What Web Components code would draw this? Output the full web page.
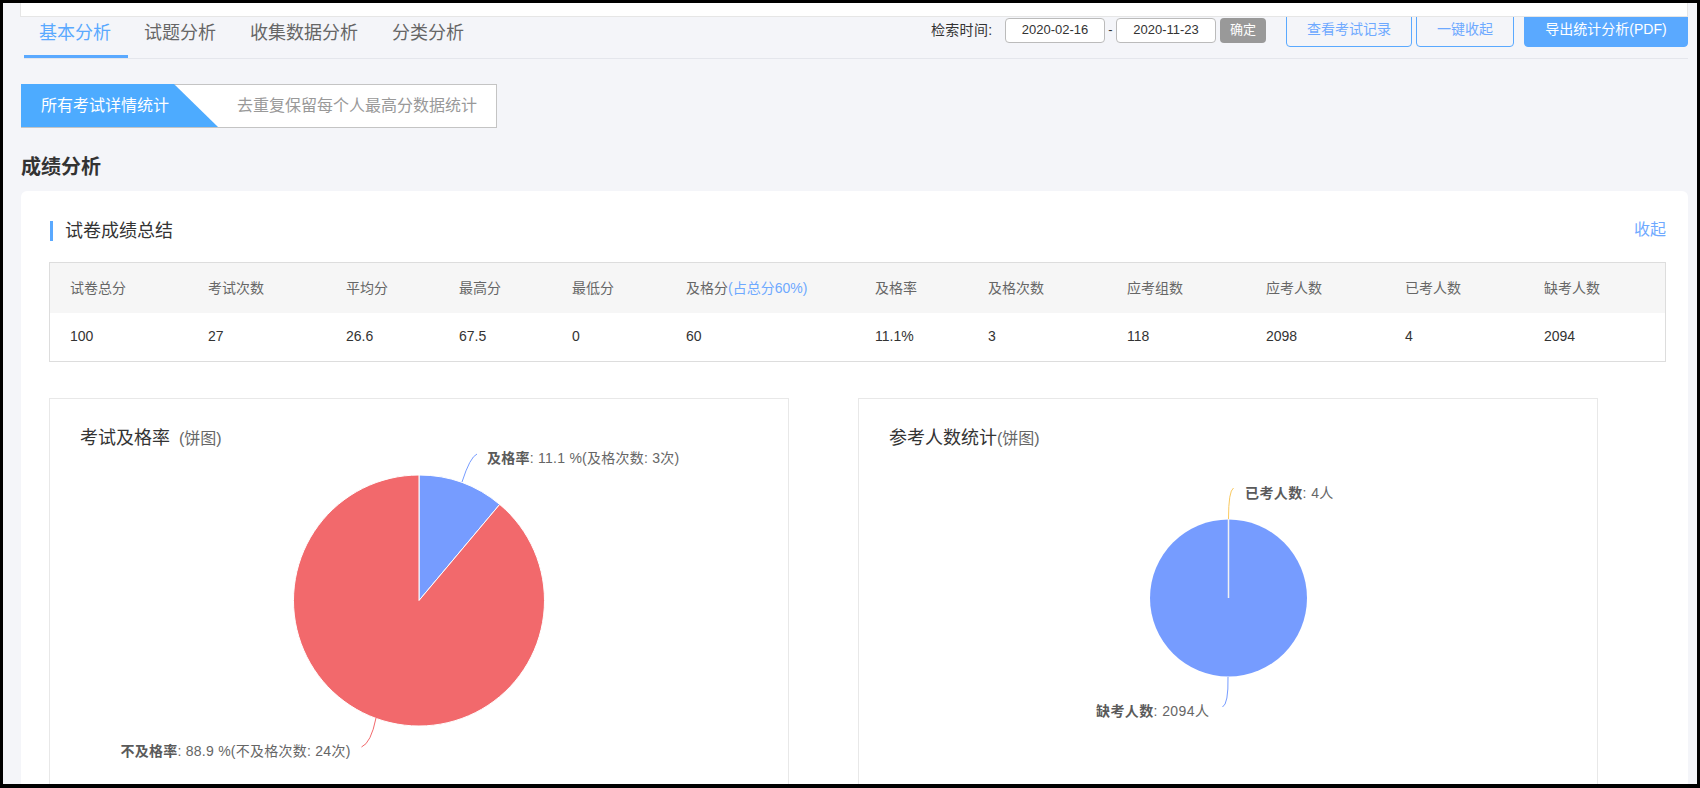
<!DOCTYPE html>
<html lang="zh">
<head>
<meta charset="utf-8">
<title>成绩分析</title>
<style>
html,body{margin:0;padding:0;background:#000}
body{width:1700px;height:788px;overflow:hidden;font-family:"Liberation Sans","Noto Sans CJK SC",sans-serif}
</style>
</head>
<body>
<analysis-app></analysis-app>
<script>
function def(name, css, html){
  customElements.define(name, class extends HTMLElement{
    constructor(){super();const r=this.attachShadow({mode:'open'});
      r.innerHTML='<style>'+css+'</style>'+html;
    }
  });
}
def('action-btn',
 `:host{display:block;box-sizing:border-box;height:34px;border:1px solid #5aa9ff;border-radius:4px;font-size:14px;line-height:31px;text-align:center;color:#6ea9ff;background:transparent}
  :host([primary]){background:#5aa9ff;color:#fff}`,
 `<slot></slot>`);
def('date-field',
 `:host{display:block;box-sizing:border-box;width:100px;height:25px;border:1px solid #bbb;border-radius:4px;background:#fff;font-size:13px;line-height:22px;text-align:center;color:#333}`,
 `<slot></slot>`);
def('tab-item',
 `:host{display:block;box-sizing:border-box;height:42px;padding:0 16px;font-size:18px;line-height:34px;color:#666;border-bottom:3px solid transparent}
  :host([active]){color:#5aa9ff;border-bottom-color:#5aa9ff}`,
 `<slot></slot>`);
def('top-bar',
 `:host{display:flex;height:42px;margin:-1px 0 0 4px;border-bottom:1px solid #e4e6ec}
  .tabs{display:flex}
  .tools{display:flex;align-items:flex-start;margin-left:auto;margin-top:-3px;font-size:14px;color:#333;white-space:nowrap}
  .label{margin-top:5px;line-height:24px;width:74px;letter-spacing:.3px}
  .date{margin-top:5px}
  .dash{margin-top:5px;width:11px;text-align:center;line-height:24px;font-size:13px;color:#333}
  .ok{margin:5px 20px 0 4px;width:46px;height:25px;background:#999;color:#fff;font-size:13px;line-height:23px;text-align:center;border-radius:4px}
  .b1{width:126px;margin-right:4px}.b2{width:98px;margin-right:10px}.b3{width:164px}
  .t3{margin-left:2px}.t4{margin-left:2px}
  tab-item:first-child{padding-left:15px;padding-right:17px}`,
 `<div class="tabs"><tab-item active>基本分析</tab-item><tab-item class="t2">试题分析</tab-item><tab-item class="t3">收集数据分析</tab-item><tab-item class="t4">分类分析</tab-item></div>
  <div class="tools"><span class="label">检索时间:</span><date-field class="date">2020-02-16</date-field><span class="dash">-</span><date-field class="date">2020-11-23</date-field><span class="ok">确定</span>
  <action-btn class="b1">查看考试记录</action-btn><action-btn class="b2">一键收起</action-btn><action-btn class="b3" primary>导出统计分析(PDF)</action-btn></div>`);
def('step-switch',
 `:host{display:flex;box-sizing:border-box;width:476px;height:44px;margin-left:1px;border:1px solid #c4c4c4;background:#fff;font-size:16px;line-height:42px;color:#999}
  .on{box-sizing:border-box;width:197px;margin-top:-1px;height:43px;margin-left:-1px;padding-left:20px;background:#4dabff;color:#fff;clip-path:polygon(0 0,153px 0,197px 100%,0 100%);line-height:44px}
  .off{padding-left:19px}`,
 `<div class="on">所有考试详情统计</div><div class="off">去重复保留每个人最高分数据统计</div>`);
def('stat-table',
 `:host{display:block;box-sizing:border-box;width:1617px;height:100px;border:1px solid #ddd;font-size:14px;color:#333}
  .row{display:grid;grid-template-columns:138px 138px 113px 113px 114px 189px 113px 139px 139px 139px 139px 1fr;padding-left:20px}
  .head{height:50px;line-height:50px;background:#f6f6f6;color:#666}
  .body{height:48px;line-height:46px}
  em{font-style:normal;color:#6ea9ff}`,
 `<div class="row head"><span>试卷总分</span><span>考试次数</span><span>平均分</span><span>最高分</span><span>最低分</span><span>及格分<em>(占总分60%)</em></span><span>及格率</span><span>及格次数</span><span>应考组数</span><span>应考人数</span><span>已考人数</span><span>缺考人数</span></div>
  <div class="row body"><span>100</span><span>27</span><span>26.6</span><span>67.5</span><span>0</span><span>60</span><span>11.1%</span><span>3</span><span>118</span><span>2098</span><span>4</span><span>2094</span></div>`);
def('pie-card',
 `:host{display:block;box-sizing:border-box;width:740px;height:420px;border:1px solid #e8e8e8;background:#fff}
  .title{padding:27px 0 0 30px;font-size:18px;line-height:24px;height:24px;color:#333;white-space:nowrap}
  .title small{font-size:16px;color:#666;margin-left:var(--sub-gap,0)}`,
 `<div class="title"><slot name="title"></slot><small><slot name="sub"></slot></small></div><slot name="chart"></slot>`);
const pieStyle=`font-family:'Liberation Sans','Noto Sans CJK SC',sans-serif;font-size:14px;fill:#666;letter-spacing:.4px`;
def('pass-pie',
 `:host{display:block}svg{display:block}`,
 `<svg width="738" height="340" viewBox="50 450 738 340" style="${pieStyle}">
   <path d="M419 600.5V475A125.5 125.5 0 0 1 499.7 504.4Z" fill="#769cff" stroke="#fff" stroke-width="1"/>
   <path d="M419 600.5L499.7 504.4A125.5 125.5 0 1 1 419 475Z" fill="#f2696c" stroke="#fff" stroke-width="1"/>
   <path d="M462 482Q470 457 477 454" fill="none" stroke="#769cff"/>
   <path d="M376 718Q371 743 361.5 747" fill="none" stroke="#f2696c"/>
   <text x="487" y="462.5" letter-spacing=".25"><tspan font-weight="700" fill="#5a5a5a">及格率</tspan>: 11.1 %(及格次数: 3次)</text>
   <text x="120.5" y="756" letter-spacing=".25"><tspan font-weight="700" fill="#5a5a5a">不及格率</tspan>: 88.9 %(不及格次数: 24次)</text>
 </svg>`);
def('count-pie',
 `:host{display:block}svg{display:block}`,
 `<svg width="738" height="340" viewBox="859 450 738 340" style="${pieStyle}">
   <circle cx="1228.5" cy="598" r="78.5" fill="#769cff"/>
   <path d="M1228.5 598V519" stroke="#f2f2f2" stroke-width="1.5"/>
   <path d="M1228.5 519Q1228.5 491 1233.5 488" fill="none" stroke="#f9c95f"/>
   <path d="M1228 677Q1228.5 704 1222.5 707" fill="none" stroke="#769cff"/>
   <text x="1245" y="497.5"><tspan font-weight="700" fill="#5a5a5a">已考人数</tspan>: 4人</text>
   <text x="1096" y="716"><tspan font-weight="700" fill="#5a5a5a">缺考人数</tspan>: 2094人</text>
 </svg>`);
def('section-card',
 `:host{display:block;box-sizing:border-box;width:1667px;margin-left:1px;height:620px;padding:29px 21px 0 28px;background:#fff;border-radius:6px 6px 0 0}
  .head{display:flex;align-items:center;justify-content:space-between;height:20px;margin-bottom:22px}
  h3{margin:1px 0 0 1px;font-weight:400;font-size:18px;line-height:20px;color:#333;border-left:3px solid #5aa9ff;padding-left:12px}
  a{font-size:16px;color:#6ea9ff;margin-top:-4px;margin-right:1px}
  .charts{display:flex;gap:69px;margin-top:36px}`,
 `<div class="head"><h3>试卷成绩总结</h3><a>收起</a></div>
  <stat-table></stat-table>
  <div class="charts">
   <pie-card style="--sub-gap:9px"><span slot="title">考试及格率</span><span slot="sub">(饼图)</span><pass-pie slot="chart"></pass-pie></pie-card>
   <pie-card><span slot="title">参考人数统计</span><span slot="sub">(饼图)</span><count-pie slot="chart"></count-pie></pie-card>
  </div>`);
def('analysis-app',
 `:host{display:block;box-sizing:border-box;width:1700px;height:788px;border:3px solid #000;border-bottom-width:4px;background:#f4f5f9;overflow:hidden;padding-left:17px;padding-right:9px}
  .panel{position:relative;z-index:1;box-sizing:border-box;width:1668px;height:14px;background:#fff;border:1px solid #e6e6e6;border-top:0}
  step-switch{margin-top:25px}
  h2{margin:27px 0 12px;font-size:20px;line-height:24px;color:#333;font-weight:700;padding-left:1px}`,
 `<div class="panel"></div><top-bar></top-bar><step-switch></step-switch><h2>成绩分析</h2><section-card></section-card>`);
</script>
</body>
</html>
